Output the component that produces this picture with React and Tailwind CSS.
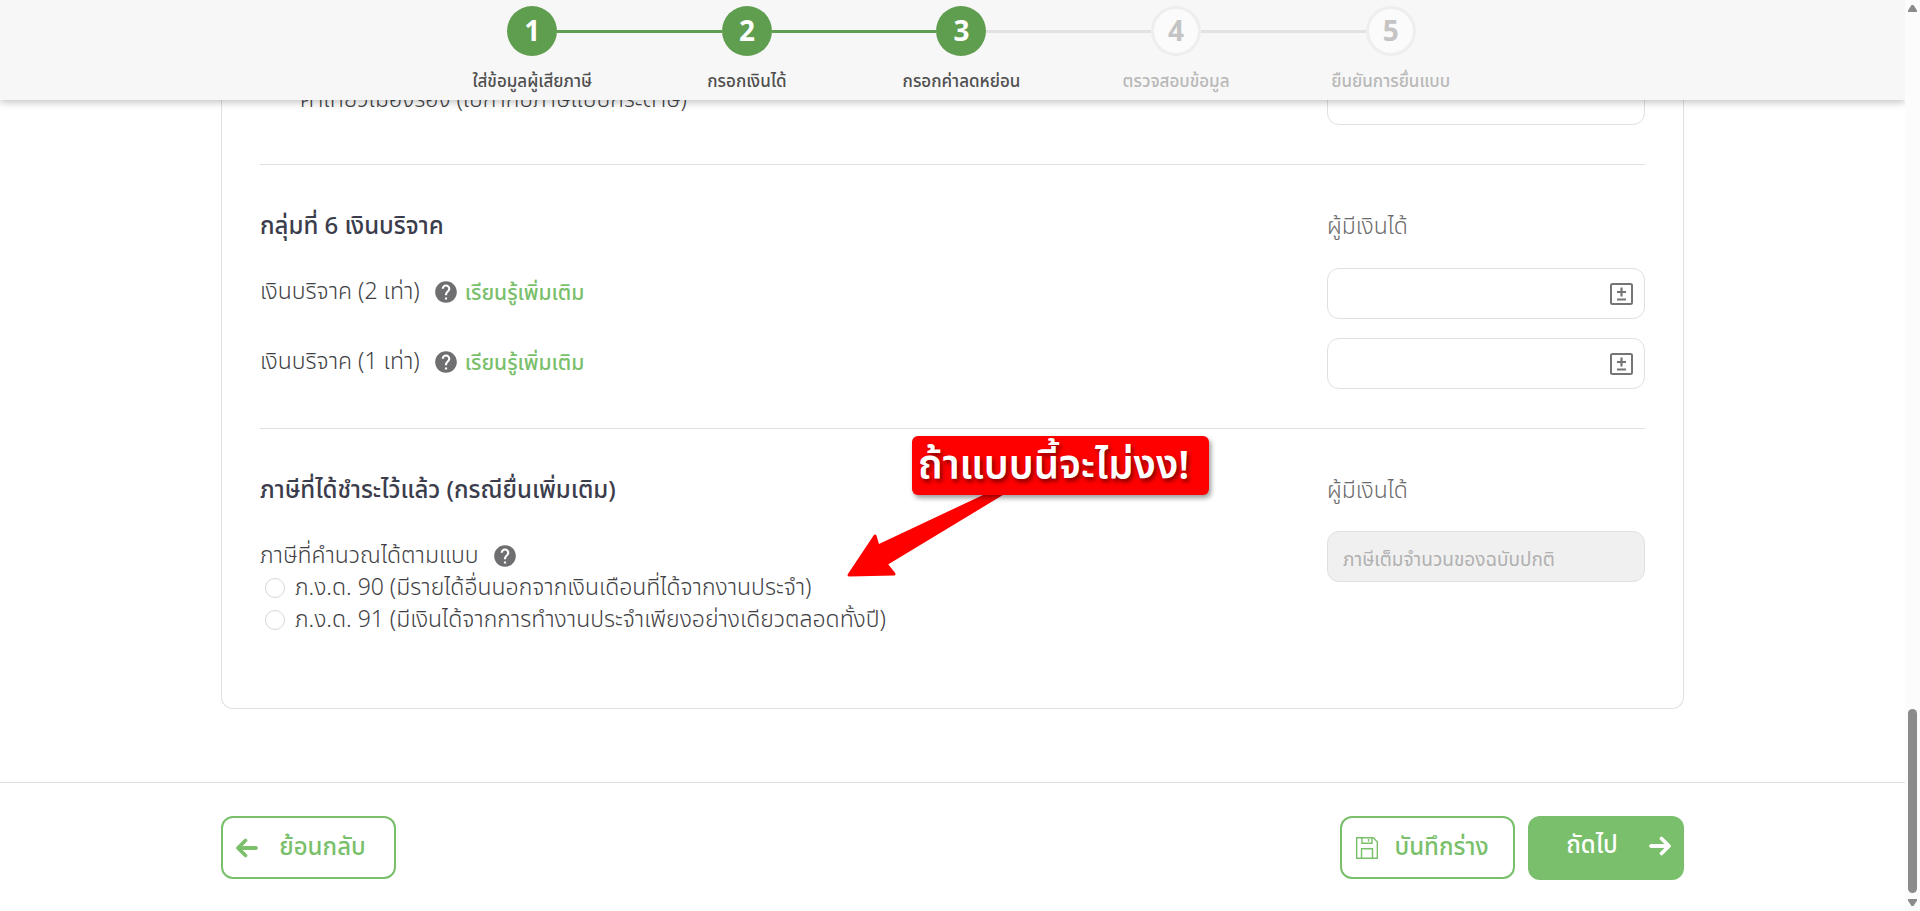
import React, { useState } from 'react';
import clsx from 'clsx';
import { FaArrowLeft, FaArrowRight } from 'react-icons/fa6';
import { MdHelp } from 'react-icons/md';

const steps = [
    { no: 1, label: 'ใส่ข้อมูลผู้เสียภาษี' },
    { no: 2, label: 'กรอกเงินได้' },
    { no: 3, label: 'กรอกค่าลดหย่อน' },
    { no: 4, label: 'ตรวจสอบข้อมูล' },
    { no: 5, label: 'ยืนยันการยื่นแบบ' },
];

const donations = [
    { id: 'donation-double', label: 'เงินบริจาค (2 เท่า)' },
    { id: 'donation-single', label: 'เงินบริจาค (1 เท่า)' },
];

const forms = [
    { id: 'pnd90', label: 'ภ.ง.ด. 90 (มีรายได้อื่นนอกจากเงินเดือนที่ได้จากงานประจำ)' },
    { id: 'pnd91', label: 'ภ.ง.ด. 91 (มีเงินได้จากการทำงานประจำเพียงอย่างเดียวตลอดทั้งปี)' },
];

const PlusMinusIcon = () => (
    <svg width="24" height="24" viewBox="0 0 24 24" fill="none" stroke="#757575" strokeWidth="2">
        <rect x="1" y="2" width="21" height="20" rx="1.5" />
        <path d="M11.5 5.5v9M7 10h9M7 17.5h9" strokeWidth="2.2" />
    </svg>
);

const SaveIcon = () => (
    <svg width="22" height="22" viewBox="0 0 22 22" fill="none" stroke="currentColor" strokeWidth="1.4">
        <path d="M.7.7h16.6l4 4v16.6H.7z" />
        <path d="M6 .7v5.6h10V.7M12.5 2v2.5" />
        <path d="M5.5 21.3v-9.6h11v9.6" />
    </svg>
);

const Stepper = ({ current }) => (
    <header className="sticky top-0 z-10 h-[100px] bg-[#f7f7f7] pl-[18px] shadow-[0_2px_8px_rgba(0,0,0,0.25)]">
        <ol className="mx-auto flex max-w-[1073px] pt-[6px]">
            {steps.map((step) => {
                const done = step.no <= current;
                return (
                    <li key={step.no} className="flex flex-1 flex-col items-center">
                        <div className="flex w-full items-center">
                            <span className={clsx('h-[3px] flex-1', step.no > 1 && (done ? 'bg-[#5f9d4f]' : 'bg-[#e2e2e2]'))} />
                            <span
                                className={clsx(
                                    'flex size-[50px] items-center justify-center rounded-full pt-1 text-[28px] font-bold',
                                    done ? 'bg-[#5f9d4f] text-white' : 'border-[3px] border-[#eeeeee] bg-[#fbfbfb] text-[#c4c4c4]'
                                )}
                            >
                                {step.no}
                            </span>
                            <span className={clsx('h-[3px] flex-1', step.no < 5 && (step.no < current ? 'bg-[#5f9d4f]' : 'bg-[#e2e2e2]'))} />
                        </div>
                        <span className={clsx('mt-[14px] text-[17px] leading-6 font-medium', done ? 'text-[#4f4f4f]' : 'text-[#b8b8b8]')}>{step.label}</span>
                    </li>
                );
            })}
        </ol>
    </header>
);

const HelpButton = () => (
    <button type="button" className="text-[#6f6f71]" aria-label="ความช่วยเหลือ">
        <MdHelp size={26} />
    </button>
);

const AmountInput = ({ id }) => (
    <div className="flex h-[51px] w-[318px] shrink-0 items-center rounded-xl border border-[#e0e0e0] bg-white pr-[10px]">
        <input id={id} type="text" inputMode="decimal" className="h-full min-w-0 flex-1 bg-transparent px-4 text-lg outline-none" />
        <button type="button" aria-label="เครื่องคิดเลข">
            <PlusMinusIcon />
        </button>
    </div>
);

const SectionHead = ({ title }) => (
    <div className="flex items-center justify-between">
        <h2 className="text-2xl leading-8 font-medium text-[#3b3d4c]">{title}</h2>
        <p className="w-[318px] text-[23px] leading-8 font-light text-[#6b6b6b]">ผู้มีเงินได้</p>
    </div>
);

const Callout = () => (
    <div className="pointer-events-none absolute top-[7px] left-[587px]">
        <svg className="absolute top-14 left-0" width="170" height="86" viewBox="0 0 170 86" fill="#fe0000" stroke="#fe0000" strokeWidth="3" strokeLinejoin="round">
            <path d="M158 0L39 72L47 82L2 83L28 44L31 54L146 0z" />
        </svg>
        <p className="relative ml-[65px] flex h-[59px] w-[297px] items-center rounded-md bg-[#fe0000] px-[6px] pt-1 text-[40px] leading-[55px] font-semibold whitespace-nowrap text-white shadow-[2px_3px_5px_rgba(0,0,0,0.4)] [text-shadow:2px_3px_4px_rgba(0,0,0,0.5)]">
            ถ้าแบบนี้จะไม่งง!
        </p>
    </div>
);

const Scrollbar = () => (
    <div className="sticky top-0 z-20 flex h-screen w-[15px] shrink-0 flex-col items-center justify-between bg-[#fcfcfc] py-[5px]">
        <svg width="9" height="7" viewBox="0 0 9 7" fill="#8b8b8b">
            <path d="M3.5 0h2L9 5.5V7H0V5.5z" />
        </svg>
        <div className="flex flex-1 flex-col justify-end pb-[6px]">
            <div className="h-[184px] w-[9px] rounded-full bg-[#8b8b8b]" />
        </div>
        <svg width="9" height="7" viewBox="0 0 9 7" fill="#8b8b8b">
            <path d="M3.5 7h2L9 1.5V0H0v1.5z" />
        </svg>
    </div>
);

const App = () => {
    const [form, setForm] = useState('');

    return (
        <div className="flex min-h-screen bg-white font-['Noto_Sans_Thai','Noto_Sans','Liberation_Sans',sans-serif] text-[#3f3f45]">
            <div className="min-w-0 flex-1">
                <Stepper current={3} />

                <main className="mx-auto -mt-[26px] max-w-[1463px]">
                    <div className="rounded-b-xl border border-t-0 border-[#e0e0e0] px-[38px] pb-[72px]">
                        <div className="flex items-center justify-between border-b border-[#e0e0e0] pb-[39px]">
                            <label htmlFor="travel" className="pl-10 text-[23px] leading-6 font-light">ค่าเที่ยวเมืองรอง (ใบกำกับภาษีแบบกระดาษ)</label>
                            <input id="travel" type="text" className="h-[51px] w-[318px] rounded-xl border border-[#e0e0e0] px-4 text-lg" />
                        </div>

                        <section className="border-b border-[#e0e0e0] pt-[46px] pb-[39px]">
                            <SectionHead title="กลุ่มที่ 6 เงินบริจาค" />
                            <div className="mt-[25px] flex flex-col gap-[19px]">
                                {donations.map((row) => (
                                    <div key={row.id} className="flex items-center justify-between">
                                        <div className="flex items-center pb-[3px]">
                                            <label htmlFor={row.id} className="mr-[13px] text-[23px] leading-8 font-light">{row.label}</label>
                                            <HelpButton />
                                            <a href="#learn-more" className="ml-[6px] pt-[3px] text-[21px] leading-8 font-medium text-[#7abf6b]">เรียนรู้เพิ่มเติม</a>
                                        </div>
                                        <AmountInput id={row.id} />
                                    </div>
                                ))}
                            </div>
                        </section>

                        <section className="relative pt-[46px]">
                            <Callout />
                            <SectionHead title="ภาษีที่ได้ชำระไว้แล้ว (กรณียื่นเพิ่มเติม)" />
                            <div className="mt-6 flex items-start justify-between">
                                <div role="radiogroup" aria-labelledby="paid-tax-label" className="pt-[9px]">
                                    <div className="flex h-8 items-center gap-[13px]">
                                        <label id="paid-tax-label" htmlFor="paid-tax" className="text-[23px] leading-8 font-light">ภาษีที่คำนวณได้ตามแบบ</label>
                                        <HelpButton />
                                    </div>
                                    {forms.map((item) => (
                                        <label key={item.id} className="flex h-8 items-center gap-[10px] pl-[5px] text-[23px] leading-8 font-light whitespace-nowrap">
                                            <input
                                                type="radio"
                                                name="form"
                                                value={item.id}
                                                checked={form === item.id}
                                                onChange={() => setForm(item.id)}
                                                className="size-5 appearance-none rounded-full border border-[#d6d6d6] bg-white checked:border-[6px] checked:border-[#7abf6b]"
                                            />
                                            {item.label}
                                        </label>
                                    ))}
                                </div>
                                <input
                                    id="paid-tax"
                                    type="text"
                                    disabled
                                    placeholder="ภาษีเต็มจำนวนของฉบับปกติ"
                                    className="h-[51px] w-[318px] rounded-xl border border-[#e0e0e0] bg-[#f0f0f0] px-[15px] pt-2 text-[19px] placeholder:text-[#b0b0b0]"
                                />
                            </div>
                        </section>
                    </div>
                </main>

                <footer className="mt-[73px] border-t border-[#e0e0e0] py-[33px]">
                    <div className="mx-auto flex max-w-[1463px] items-start gap-[13px] text-2xl font-medium">
                        <button type="button" className="mr-auto flex h-[63px] w-[175px] items-center rounded-xl border-2 border-[#7abf6b] pl-3 text-[#7abf6b]">
                            <FaArrowLeft size={24} stroke="currentColor" strokeWidth={20} />
                            <span className="flex-1 pr-2">ย้อนกลับ</span>
                        </button>
                        <button type="button" className="flex h-[63px] w-[175px] items-center rounded-xl border-2 border-[#7abf6b] pl-[14px] text-[#7abf6b]">
                            <SaveIcon />
                            <span className="flex-1 pr-2">บันทึกร่าง</span>
                        </button>
                        <button type="button" className="flex h-16 w-[156px] items-center rounded-xl bg-[#7abf6b] pr-3 pb-1 text-white">
                            <span className="flex-1 pl-2">ถัดไป</span>
                            <FaArrowRight size={24} stroke="currentColor" strokeWidth={20} />
                        </button>
                    </div>
                </footer>
            </div>
            <Scrollbar />
        </div>
    );
};

export default App;
